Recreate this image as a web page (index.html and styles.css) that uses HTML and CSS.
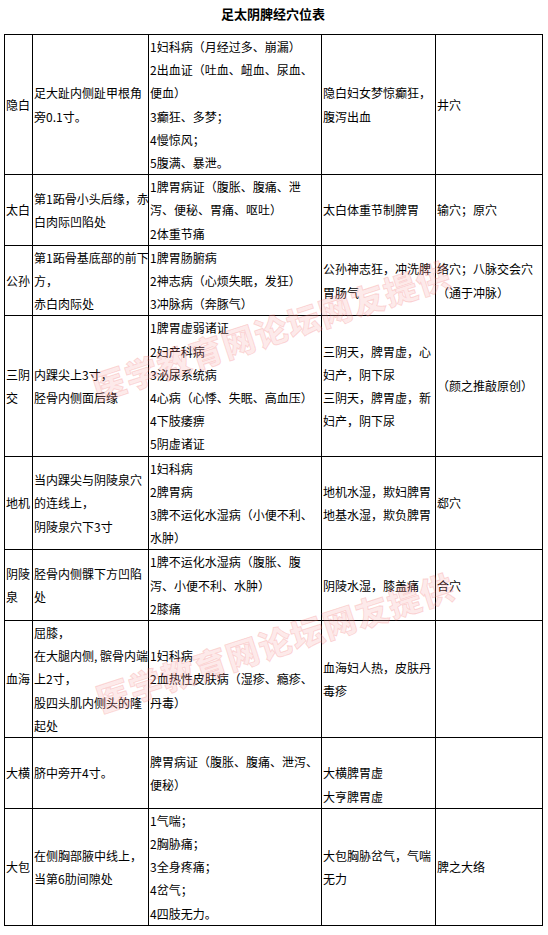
FILE: index.html
```html
<!DOCTYPE html>
<html lang="zh">
<head>
<meta charset="utf-8">
<title>足太阴脾经穴位表</title>
<link rel="stylesheet" href="styles.css">
</head>
<body>
<div class="page">
  <h1 class="title">足太阴脾经穴位表</h1>
  <div class="table-wrap">
    <table class="acu">
      <colgroup>
        <col class="c1"><col class="c2"><col class="c3"><col class="c4"><col class="c5">
      </colgroup>
      <tbody>
        <tr>
          <td>隐白</td>
          <td>足大趾内侧趾甲根角<br>旁0.1寸。</td>
          <td>1妇科病（月经过多、崩漏）<br>2出血证（吐血、衄血、尿血、<br>便血）<br>3癫狂、多梦；<br>4慢惊风；<br>5腹满、暴泄。</td>
          <td>隐白妇女梦惊癫狂，<br>腹泻出血</td>
          <td>井穴</td>
        </tr>
        <tr>
          <td>太白</td>
          <td>第1跖骨小头后缘，赤<br>白肉际凹陷处</td>
          <td>1脾胃病证（腹胀、腹痛、泄<br>泻、便秘、胃痛、呕吐）<br>2体重节痛</td>
          <td>太白体重节制脾胃</td>
          <td>输穴；原穴</td>
        </tr>
        <tr>
          <td>公孙</td>
          <td>第1跖骨基底部的前下<br>方，<br>赤白肉际处</td>
          <td>1脾胃肠腑病<br>2神志病（心烦失眠，发狂）<br>3冲脉病（奔豚气）</td>
          <td>公孙神志狂，冲洗脾<br>胃肠气</td>
          <td>络穴；八脉交会穴<br>（通于冲脉）</td>
        </tr>
        <tr>
          <td>三阴<br>交</td>
          <td>内踝尖上3寸，<br>胫骨内侧面后缘</td>
          <td>1脾胃虚弱诸证<br>2妇产科病<br>3泌尿系统病<br>4心病（心悸、失眠、高血压）<br>4下肢痿痹<br>5阴虚诸证</td>
          <td>三阴天，脾胃虚，心<br>妇产，阴下尿<br>三阴天，脾胃虚，新<br>妇产，阴下尿</td>
          <td>（颜之推敲原创）</td>
        </tr>
        <tr>
          <td>地机</td>
          <td>当内踝尖与阴陵泉穴<br>的连线上，<br>阴陵泉穴下3寸</td>
          <td>1妇科病<br>2脾胃病<br>3脾不运化水湿病（小便不利、<br>水肿）</td>
          <td>地机水湿，欺妇脾胃<br>地基水湿，欺负脾胃</td>
          <td>郄穴</td>
        </tr>
        <tr>
          <td>阴陵<br>泉</td>
          <td>胫骨内侧髁下方凹陷<br>处</td>
          <td>1脾不运化水湿病（腹胀、腹<br>泻、小便不利、水肿）<br>2膝痛</td>
          <td>阴陵水湿，膝盖痛</td>
          <td>合穴</td>
        </tr>
        <tr>
          <td>血海</td>
          <td>屈膝，<br>在大腿内侧, 髌骨内端<br>上2寸，<br>股四头肌内侧头的隆<br>起处</td>
          <td>1妇科病<br>2血热性皮肤病（湿疹、瘾疹、<br>丹毒）</td>
          <td>血海妇人热，皮肤丹<br>毒疹</td>
          <td></td>
        </tr>
        <tr>
          <td>大横</td>
          <td>脐中旁开4寸。</td>
          <td>脾胃病证（腹胀、腹痛、泄泻、<br>便秘）</td>
          <td><br>大横脾胃虚<br>大亨脾胃虚</td>
          <td></td>
        </tr>
        <tr>
          <td>大包</td>
          <td>在侧胸部腋中线上，<br>当第6肋间隙处</td>
          <td>1气喘；<br>2胸胁痛；<br>3全身疼痛；<br>4岔气；<br>4四肢无力。</td>
          <td>大包胸胁岔气，气喘<br>无力</td>
          <td>脾之大络</td>
        </tr>
      </tbody>
    </table>
    <div class="watermark wm1">医学教育网论坛网友提供</div>
    <div class="watermark wm2">医学教育网论坛网友提供</div>
  </div>
</div>
</body>
</html>
```
FILE: styles.css
```css
html, body {
  margin: 0;
  padding: 0;
  background: #ffffff;
}

.page {
  width: 548px;
  padding: 0 0 0 4px;
  box-sizing: border-box;
  font-family: "Noto Sans CJK SC", "Liberation Sans", sans-serif;
  color: #000;
}

.title {
  margin: 0;
  width: 538px;
  font-size: 13px;
  font-weight: bold;
  line-height: 28px;
  text-align: center;
}

.table-wrap {
  position: relative;
  margin-top: 6px;
  width: 538px;
}

.acu {
  border-collapse: collapse;
  table-layout: fixed;
  width: 538px;
  font-size: 12px;
  line-height: 23.2px;
}

.acu td {
  border: 1px solid #000;
  padding: 0 0 0 1px;
  vertical-align: middle;
  text-align: left;
  white-space: nowrap;
  overflow: visible;
}

.c1 { width: 28px; }
.c2 { width: 116px; }
.c3 { width: 173px; }
.c4 { width: 114px; }
.c5 { width: 107px; }

.watermark {
  position: absolute;
  font-family: "Noto Sans CJK SC", sans-serif;
  font-size: 33px;
  font-weight: 900;
  color: rgba(250, 160, 160, 0.22);
  -webkit-text-stroke: 1px rgba(240, 100, 100, 0.22);
  white-space: nowrap;
  transform-origin: center center;
  pointer-events: none;
  letter-spacing: 1px;
}

.wm1 {
  left: 80px;
  top: 272px;
  transform: rotate(-18deg);
}

.wm2 {
  left: 84px;
  top: 584px;
  transform: rotate(-18deg);
}
```
